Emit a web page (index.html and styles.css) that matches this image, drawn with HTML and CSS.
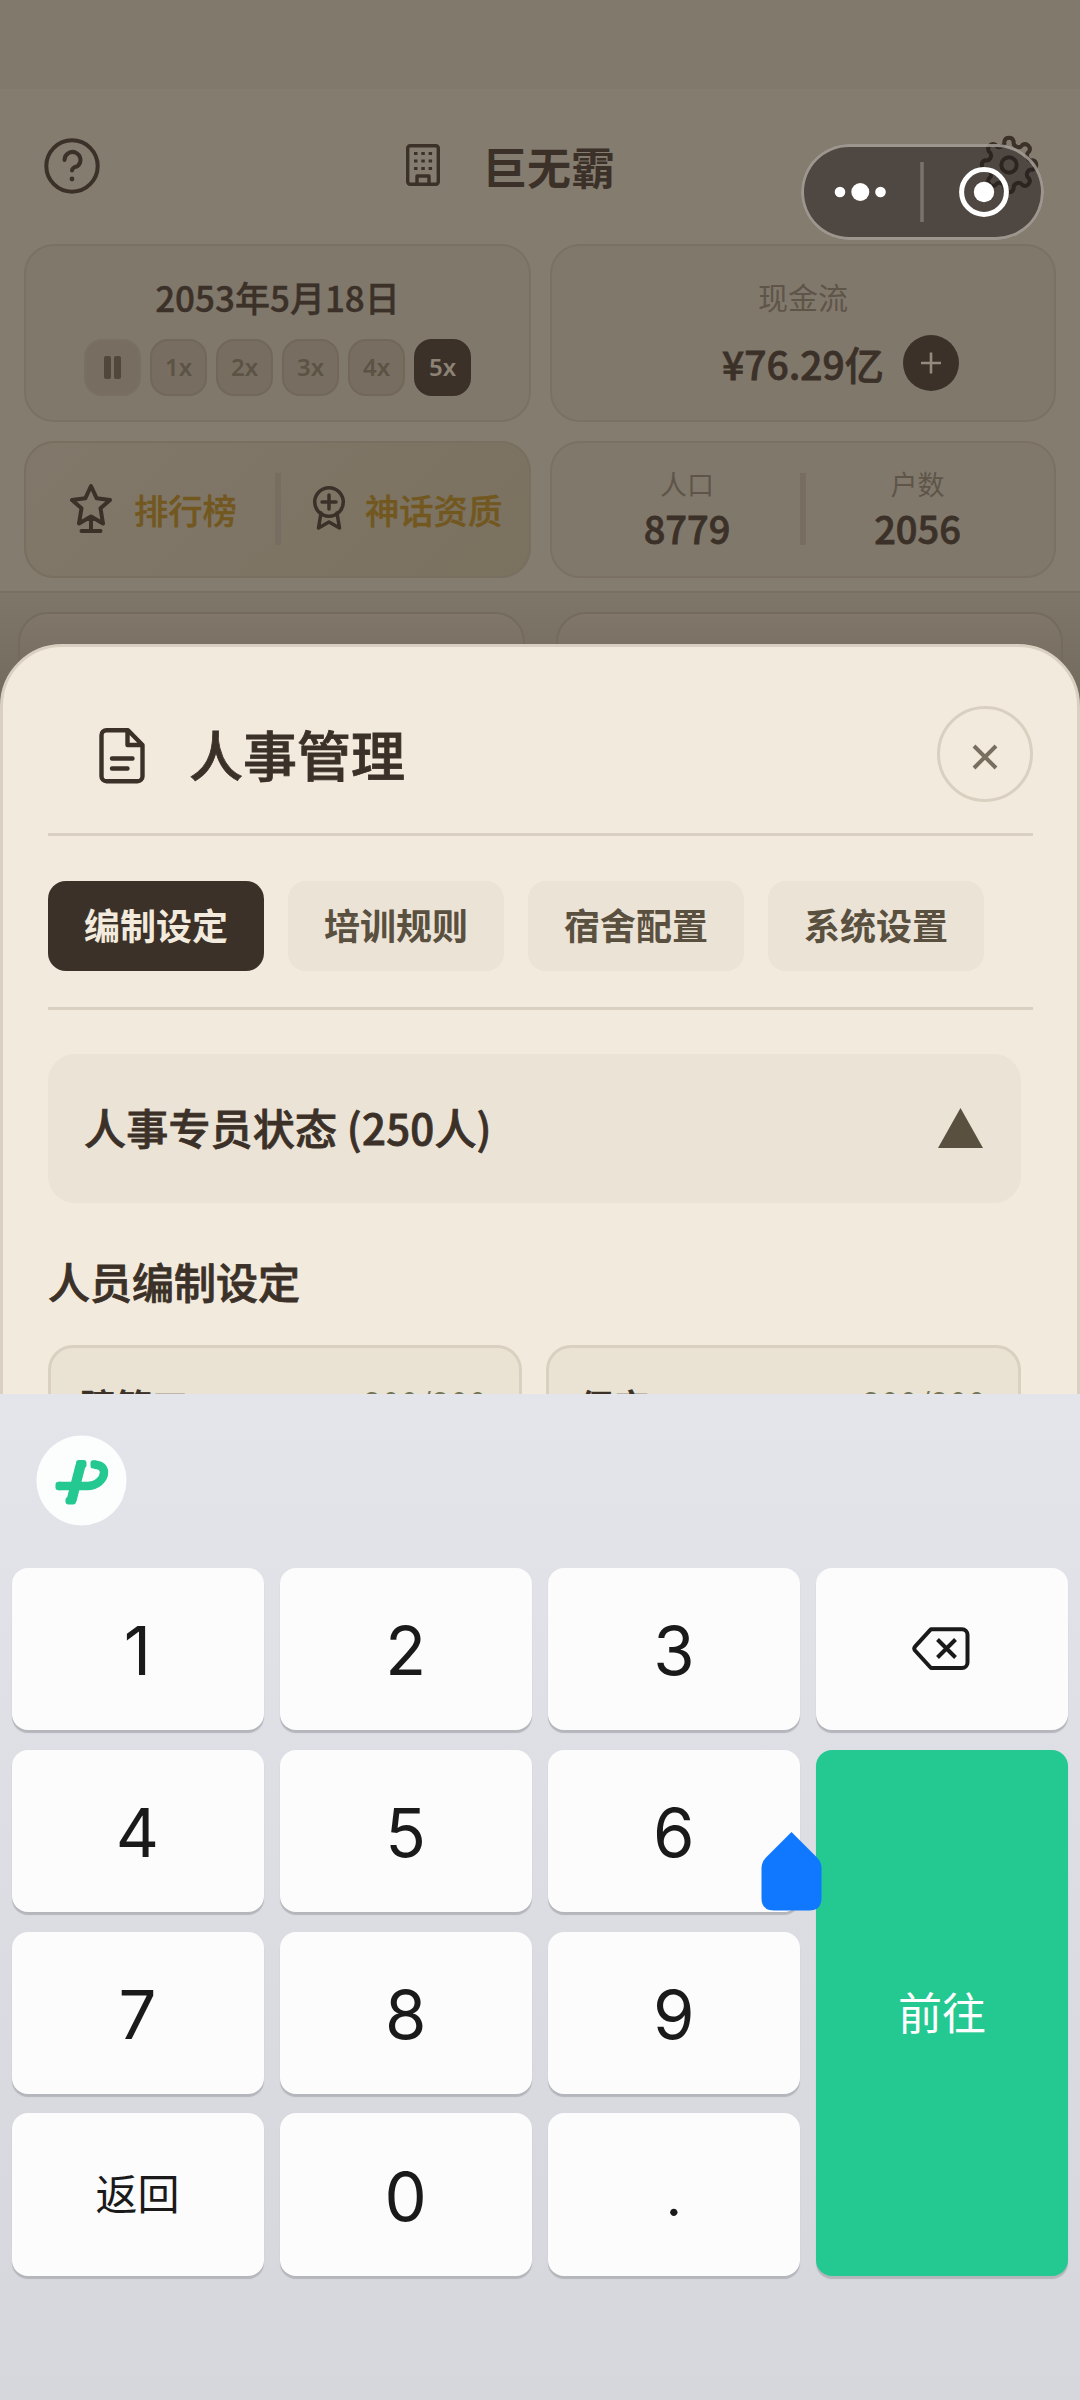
FILE: index.html
```html
<!DOCTYPE html>
<html lang="zh-CN">
<head>
<meta charset="utf-8">
<title>人事管理</title>
<link rel="stylesheet" href="styles.css">
</head>
<body>
<div class="phone">
  <main class="app">
    <div class="status-bar"></div>
    <header class="top">
      <div class="title-row">
        <svg class="icon help" width="56" height="56" viewBox="0 0 56 56"><circle cx="28" cy="28" r="25.7"/><path d="M20.5 22a8 8 0 1 1 13 6.200Q28 29.500 28 32.500"/><circle class="fill" cx="28" cy="41" r="2.400"/></svg>
        <div class="brand">
          <svg class="icon building" width="34" height="42" viewBox="0 0 34 42"><rect x="1.700" y="1.700" width="30.600" height="38.600" rx="2.500"/><path d="M11 40v-8h12v8"/><g class="fill"><rect x="8" y="8" width="3.500" height="3"/><rect x="15.300" y="8" width="3.500" height="3"/><rect x="22.600" y="8" width="3.500" height="3"/><rect x="8" y="15.500" width="3.500" height="3"/><rect x="15.300" y="15.500" width="3.500" height="3"/><rect x="22.600" y="15.500" width="3.500" height="3"/><rect x="8" y="23" width="3.500" height="3"/><rect x="15.300" y="23" width="3.500" height="3"/><rect x="22.600" y="23" width="3.500" height="3"/></g></svg>
          <span>巨无霸</span>
        </div>
        <svg class="icon gear" width="60" height="60" viewBox="-30 -30 60 60"><path d="M23.540-4.680A4.800 4.800 0 0 1 23.540 4.680A4.800 4.800 0 0 0 19.960 13.330A4.800 4.800 0 0 1 13.330 19.960A4.800 4.800 0 0 0 4.680 23.540A4.800 4.800 0 0 1-4.680 23.540A4.800 4.800 0 0 0-13.330 19.960A4.800 4.800 0 0 1-19.960 13.330A4.800 4.800 0 0 0-23.540 4.680A4.800 4.800 0 0 1-23.540-4.680A4.800 4.800 0 0 0-19.960-13.330A4.800 4.800 0 0 1-13.330-19.960A4.800 4.800 0 0 0-4.680-23.540A4.800 4.800 0 0 1 4.680-23.540A4.800 4.800 0 0 0 13.330-19.960A4.800 4.800 0 0 1 19.960-13.330A4.800 4.800 0 0 0 23.540-4.680Z"/><circle r="7.700"/></svg>
      </div>
      <div class="stats">
        <section class="card time">
          <div class="date">2053年5月18日</div>
          <div class="speeds">
            <span class="speed pause"><i></i><i></i></span>
            <span class="speed">1x</span>
            <span class="speed">2x</span>
            <span class="speed">3x</span>
            <span class="speed">4x</span>
            <span class="speed on">5x</span>
          </div>
        </section>
        <section class="card cash">
          <div class="label">现金流</div>
          <div class="amount"><span>¥76.29亿</span><svg width="56" height="56" viewBox="0 0 56 56"><circle cx="28" cy="28" r="28" fill="#3b3128"/><path d="M18 28h20M28 17.500v21" stroke="#938b7e" stroke-width="2.600"/></svg></div>
        </section>
        <section class="card honor">
          <div class="honor-item rank"><svg class="icon" width="44" height="52" viewBox="0 0 44 52"><path d="M22 4l5.700 12.300L41 18l-9.500 8.300L34 41.500l-12-7-12 7 2.500-15.200L3 18l13.300-1.700ZM22 35v13.500M12.500 49h19"/></svg><span>排行榜</span></div>
          <i class="bar"></i>
          <div class="honor-item myth"><svg class="icon thin" width="34" height="46" viewBox="0 0 34 46"><circle cx="17" cy="17" r="14.300"/><path d="M17 10v14M10 17h14M9 28L6.500 43 17 37l10.500 6L25 28"/></svg><span>神话资质</span></div>
        </section>
        <section class="card people">
          <div class="count"><small>人口</small><b>8779</b></div>
          <i class="bar"></i>
          <div class="count"><small>户数</small><b>2056</b></div>
        </section>
      </div>
    </header>
    <div class="next-cards"><div></div><div></div></div>
  </main>

  <div class="capsule">
    <svg width="243" height="96" viewBox="0 0 243 96"><g fill="#fff"><circle cx="39" cy="48" r="5.300"/><circle cx="59.300" cy="48" r="9"/><circle cx="79.500" cy="48" r="5.300"/><circle cx="183" cy="48" r="10.200"/></g><circle cx="183" cy="48" r="22.400" fill="none" stroke="#fff" stroke-width="5"/><path d="M121 18v60" stroke="#7a736b" stroke-width="3.500"/></svg>
  </div>

  <section class="sheet">
    <div class="sheet-head">
      <svg class="icon doc" width="46" height="56" viewBox="0 0 46 56"><path d="M29 2.200H7.500a5 5 0 0 0-5 5v41a5 5 0 0 0 5 5h31a5 5 0 0 0 5-5V17ZM28.500 2.500V17H43M13 30.500h20.500M13 40.500h15.500"/></svg>
      <h1>人事管理</h1>
      <div class="close"><svg width="26" height="26" viewBox="0 0 26 26"><path d="M2 2L24 24M24 2L2 24" stroke="#786f60" stroke-width="4"/></svg></div>
    </div>
    <nav class="tabs">
      <span class="tab active">编制设定</span>
      <span class="tab">培训规则</span>
      <span class="tab">宿舍配置</span>
      <span class="tab">系统设置</span>
    </nav>
    <div class="panel"><span>人事专员状态 (250人)</span><i class="triangle"></i></div>
    <h2>人员编制设定</h2>
    <div class="roles">
      <div class="role"><b>障管工</b><span>200/200</span></div>
      <div class="role"><b>保安</b><span>200/200</span></div>
    </div>
  </section>

  <section class="keyboard">
    <div class="toolbar"><svg width="91" height="91" viewBox="0 0 91 91"><circle cx="45.500" cy="45.500" r="45" fill="#fcfdfd"/><g fill="none" stroke="#24c891" stroke-linecap="butt" stroke-linejoin="round"><path d="M23 51H51C61 51 68 44 68 37.500C68 32.500 64 29.500 58 29.700" stroke-width="8.400"/><path d="M44.500 30.500L35.500 65.500" stroke-width="10"/></g><g fill="#24c891"><rect x="40" y="25" width="10.500" height="8" rx="3"/><rect x="29.500" y="62" width="10.500" height="7.500" rx="3"/><rect x="19.500" y="46.800" width="8" height="8.400" rx="3"/><rect x="54.500" y="25.300" width="7" height="8.200" rx="2.500"/></g></svg></div>
    <div class="keys">
      <div class="key">1</div><div class="key">2</div><div class="key">3</div>
      <div class="key erase"><svg width="58" height="44" viewBox="0 0 58 44"><path d="M19 2.200H50a5.500 5.500 0 0 1 5.500 5.500V35.500A5.500 5.500 0 0 1 50 41H19L3 23.500Q1.500 21.600 3 19.700ZM25.500 12.500L43.500 30.500M43.500 12.500L25.500 30.500" fill="none" stroke="#1a1a1a" stroke-width="4" stroke-linejoin="round"/></svg></div>
      <div class="key">4</div><div class="key">5</div><div class="key">6</div>
      <div class="key go">前往</div>
      <div class="key">7</div><div class="key">8</div><div class="key">9</div>
      <div class="key word">返回</div><div class="key">0</div><div class="key dot">.</div>
    </div>
  </section>
  <svg class="handle" width="61" height="79" viewBox="0 0 61 79"><path d="M30.500 0L56 25.500Q60.500 30 60.500 36V66Q60.500 78.500 48 78.500H13Q.5 78.500.5 66V36Q.5 30 5 25.500Z" fill="#1077ff"/></svg>
</div>
</body>
</html>
```
FILE: styles.css
```css
* { box-sizing: border-box; }

body {
  margin: 0;
  font-family: "Noto Sans CJK SC", sans-serif;
  color: #3b3128;
}

.phone {
  position: relative;
  width: 1080px;
  height: 2400px;
  overflow: hidden;
}

.app {
  height: 1400px;
  background: linear-gradient(#7e7669 592px, #746c5f 690px);
}

.status-bar { height: 89px; background: #82796d; }

.icon {
  fill: none;
  stroke: #3b3128;
  stroke-width: 4;
  stroke-linecap: round;
  stroke-linejoin: round;
}
.icon .fill { fill: #3b3128; stroke: none; }

.top {
  height: 504px;
  padding: 0 24px;
  background: #857c70;
  border-bottom: 2px solid #797063;
}

.title-row {
  display: flex;
  height: 154.5px;
  padding: 46px 17px 0 20px;
}
.help { margin-top: 3px; }
.brand {
  display: flex;
  flex: 1;
  gap: 43px;
  margin-left: 306px;
  font-size: 44px;
  font-weight: 700;
  line-height: 62px;
}
.building { margin-top: 9px; stroke-width: 3.4; }

.stats {
  display: grid;
  grid-template-columns: 507px 506px;
  grid-template-rows: 178px 137px;
  gap: 19px;
}
.card {
  border: 2px solid #7a7164;
  border-radius: 30px;
  background: #81786c;
}
.date {
  margin-top: 26px;
  font-size: 35px;
  font-weight: 500;
  line-height: 50px;
  text-align: center;
  -webkit-text-stroke: .4px #3b3128;
}
.speeds {
  display: flex;
  gap: 9px;
  margin: 17px 0 0 58px;
}
.speed {
  display: flex;
  align-items: center;
  justify-content: center;
  width: 57px;
  height: 57px;
  border: 2px solid #716859;
  border-radius: 18px;
  background: #776e61;
  color: #5c5345;
  font: 600 24px/1 "Noto Sans", sans-serif;
}
.pause { gap: 3px; border-color: #796f62; }
.pause i { width: 7px; height: 23px; border-radius: 2px; background: #51473a; }
.speed.on { border-color: #3b3128; background: #3b3128; color: #8c8376; }

.label {
  margin-top: 28px;
  font-size: 30px;
  line-height: 44px;
  text-align: center;
  color: #5e5548;
}
.amount {
  display: flex;
  align-items: center;
  gap: 19px;
  margin: 17px 0 0 170px;
  font-size: 39px;
  font-weight: 500;
  line-height: 56px;
  -webkit-text-stroke: .8px #3b3128;
}

.honor {
  display: flex;
  align-items: center;
  border-color: #796f60;
  background: linear-gradient(135deg, #81786b, #7a715f);
  color: #72571f;
  font-size: 34.3px;
  font-weight: 500;
  line-height: 48px;
  -webkit-text-stroke: .4px #72571f;
}
.honor-item { display: flex; align-items: center; }
.honor-item svg { margin-bottom: 3px; }
.rank { gap: 21px; width: 249px; padding-left: 43px; }
.myth { gap: 19px; padding-left: 31px; }
.thin { stroke-width: 3.5; }
.bar { width: 6px; height: 72px; background: #776e61; }

.people { display: flex; align-items: center; }
.people .count:first-child { width: 248px; padding-left: 22px; }
.people .count:last-child { width: 248px; padding-right: 25px; }
.count { display: flex; flex-direction: column; margin-bottom: 1px; text-align: center; }
.count small { font-size: 27px; line-height: 38px; color: #5e5548; }
.count b {
  font-size: 38px;
  font-weight: 500;
  line-height: 50px;
  -webkit-text-stroke: .8px #3b3128;
}

.next-cards {
  display: grid;
  grid-template-columns: 507px 507px;
  gap: 31px;
  padding: 19px 0 0 18px;
}
.next-cards div {
  height: 200px;
  border: 2px solid #746b5e;
  border-radius: 30px;
  background: linear-gradient(#80776a, #756d60 60px);
}

.capsule {
  position: absolute;
  left: 801px;
  top: 144px;
  width: 243px;
  height: 96px;
  border-radius: 48px;
  background: rgba(30, 25, 24, .52);
  box-shadow: inset 0 0 0 3px rgba(190, 184, 176, .7);
}
.capsule svg { display: block; }

.sheet {
  position: absolute;
  left: 0;
  top: 643.5px;
  width: 1080px;
  height: 900px;
  padding: 0 44px 0 45px;
  border: 3px solid #d9d0c1;
  border-radius: 62px 62px 0 0;
  background: #f2eadc;
}
.sheet-head {
  display: flex;
  align-items: center;
  height: 189px;
  padding: 26px 0 0 51px;
  border-bottom: 3px solid #d9d0c1;
}
.doc { margin-top: 6px; stroke-width: 4.4; }
h1 {
  flex: 1;
  margin: 2px 0 0 44px;
  font-size: 54px;
  font-weight: 500;
  line-height: 80px;
  -webkit-text-stroke: .8px #3b3128;
}
.close {
  display: flex;
  align-items: center;
  justify-content: center;
  width: 96px;
  height: 96px;
  padding-top: 6px;
  margin-top: 3px;
  border: 3px solid #d9d0c1;
  border-radius: 50%;
}
.tabs {
  display: flex;
  gap: 24px;
  padding: 45px 0 36px;
  border-bottom: 3px solid #d9d0c1;
}
.tab {
  width: 216px;
  height: 90px;
  border-radius: 18px;
  background: #ebe3d6;
  color: #5a5040;
  font-size: 36px;
  font-weight: 700;
  line-height: 86px;
  text-align: center;
}
.tab.active { background: #3b3128; color: #f2eadc; }
.panel {
  display: flex;
  align-items: center;
  justify-content: space-between;
  width: 973px;
  height: 149px;
  margin-top: 44px;
  padding: 0 38px 0 36px;
  border-radius: 27px;
  background: #ebe3d6;
  font-size: 42px;
  font-weight: 500;
  letter-spacing: .2px;
  -webkit-text-stroke: .8px #3b3128;
}
.panel span { margin-bottom: 3px; }
.triangle {
  width: 45px;
  height: 40px;
  background: #5a5040;
  clip-path: polygon(50% 0, 100% 100%, 0 100%);
}
h2 {
  margin: 48px 0 34px;
  font-size: 42px;
  font-weight: 500;
  line-height: 60px;
  -webkit-text-stroke: .8px #3b3128;
}
.roles {
  display: grid;
  grid-template-columns: 474px 475px;
  gap: 24px;
}
.role {
  display: flex;
  justify-content: space-between;
  height: 180px;
  padding: 30px 32px 0 29px;
  border: 3px solid #d9d0c1;
  border-radius: 25px;
  background: #eae3d3;
  font-size: 36px;
  line-height: 54px;
}
.role b { font-weight: 500; -webkit-text-stroke: .7px #3b3128; }
.role span { font-size: 32px; line-height: 49px; letter-spacing: .6px; color: #757558; }

.keyboard {
  position: absolute;
  left: 0;
  top: 1394px;
  width: 1080px;
  height: 1006px;
  padding: 41px 11.5px 0;
  background: linear-gradient(#e4e5eb, #d9dae0 700px, #d6d7dd);
}
.toolbar { height: 132px; padding-left: 24.5px; }
.keys {
  display: grid;
  grid-template-columns: repeat(4, 252px);
  grid-template-rows: repeat(4, 162.3px);
  gap: 19.5px 16.2px;
  margin-top: 1px;
  width: 1058px;
}
.key {
  display: flex;
  align-items: center;
  justify-content: center;
  padding-top: 3px;
  border-radius: 16px;
  background: #fcfcfd;
  box-shadow: 0 3px 1px #b5b6bb;
  color: #1a1a1a;
  font: 400 67px/1 Inter, sans-serif;
}
.key.erase { padding: 0 3px 0 0; }
.key.go {
  grid-column: 4;
  grid-row: 2 / 5;
  padding: 0 0 4px;
  background: #24c891;
  color: #fff;
  font: 400 44px/1 "Noto Sans CJK SC", sans-serif;
}
.key.word { padding: 0 0 5px; font: 400 42px/1 "Noto Sans CJK SC", sans-serif; }
.key.dot { font-size: 56px; }

.handle { position: absolute; left: 761px; top: 1832px; }
```
